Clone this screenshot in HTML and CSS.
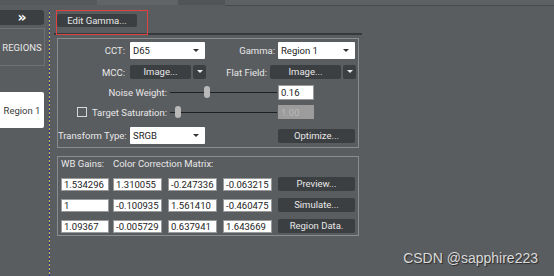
FILE: index.html
```html
<!DOCTYPE html>
<html lang="en">
<head>
    <meta charset="UTF-8">
    <title>Region Settings</title>
    <link rel="stylesheet" href="styles.css">
</head>
<body>

    <div class="strip">
        <span class="seg seg-1"></span>
        <span class="seg seg-2"></span>
        <span class="seg seg-3"></span>
        <span class="seg seg-4"></span>
    </div>

    <div class="app">
        <aside class="side">
            <button class="collapse">&raquo;</button>
            <div class="tab">REGIONS</div>
            <div class="region">Region 1</div>
        </aside>

        <div class="divider"></div>

        <main class="main">
            <div class="toolbar">
                <button class="btn gamma">Edit Gamma...</button>
            </div>
            <div class="mark"></div>
            <div class="rule"></div>

            <section class="group settings">
                <div class="row">
                    <label class="lbl w-a">CCT:</label>
                    <div class="combo c-a">D65<span class="caret"></span></div>
                    <label class="lbl w-b">Gamma:</label>
                    <div class="combo c-b">Region 1<span class="caret"></span></div>
                </div>
                <div class="row r-split">
                    <label class="lbl w-a">MCC:</label>
                    <div class="split s-a">
                        <button class="btn">Image...</button>
                        <button class="btn arrow"><span class="caret light"></span></button>
                    </div>
                    <label class="lbl w-d">Flat Field:</label>
                    <div class="split s-b">
                        <button class="btn">Image...</button>
                        <button class="btn arrow"><span class="caret light"></span></button>
                    </div>
                </div>
                <div class="row r-slide">
                    <label class="lbl w-c">Noise Weight:</label>
                    <div class="slider"><span class="thumb" style="left: 34px"></span></div>
                    <div class="field num">0.16</div>
                </div>
                <div class="row r-slide r-sat">
                    <div class="lbl w-c">
                        <span class="check"></span>
                        <span>Target Saturation:</span>
                    </div>
                    <div class="slider"><span class="thumb" style="left: 5px"></span></div>
                    <div class="field num off">1.00</div>
                </div>
                <div class="row r-last">
                    <label class="lbl w-a">Transform Type:</label>
                    <div class="combo c-a">SRGB<span class="caret"></span></div>
                    <button class="btn wide">Optimize...</button>
                </div>
            </section>

            <section class="group matrix">
                <div class="heads">
                    <span class="h-wb">WB Gains:</span>
                    <span>Color Correction Matrix:</span>
                </div>
                <div class="mrow">
                    <div class="field wb">1.534296</div>
                    <div class="field cell">1.310055</div>
                    <div class="field cell">-0.247336</div>
                    <div class="field cell">-0.063215</div>
                    <button class="btn wide">Preview...</button>
                </div>
                <div class="mrow">
                    <div class="field wb">1</div>
                    <div class="field cell">-0.100935</div>
                    <div class="field cell">1.561410</div>
                    <div class="field cell">-0.460475</div>
                    <button class="btn wide">Simulate...</button>
                </div>
                <div class="mrow">
                    <div class="field wb">1.09367</div>
                    <div class="field cell">-0.005729</div>
                    <div class="field cell">0.637941</div>
                    <div class="field cell">1.643669</div>
                    <button class="btn wide">Region Data.</button>
                </div>
            </section>
        </main>
    </div>

    <div class="watermark">CSDN @sapphire223</div>

</body>
</html>
```

FILE: styles.css
```css
body {
    margin: 0;
    height: 276px;
    overflow: hidden;
    position: relative;
    background-color: #5a5d60;
    color: #e8e8e8;
    font-family: Roboto, "Noto Sans", sans-serif;
    font-size: 9.5px;
}

/* franja superior */
.strip {
    display: flex;
    align-items: flex-start;
    height: 6px;
}

.seg {
    height: 5px;
}

.seg-1 { width: 97px; background-color: #56595c; }
.seg-2 { width: 81px; background-color: #616467; }
.seg-3 { width: 47px; background-color: #525558; }
.seg-4 {
    flex: 1;
    background-color: #5e6164;
    border-bottom: 1px solid #484a4d;
}

.app {
    display: flex;
    height: 270px;
}

/* barra lateral */
.side {
    width: 45px;
    display: flex;
    flex-direction: column;
}

.collapse {
    margin-top: 4px;
    width: 44px;
    height: 15px;
    padding: 0;
    border: none;
    border-radius: 0 3px 3px 0;
    background-color: #3c3f42;
    color: #fff;
    font-family: "DejaVu Sans", sans-serif;
    font-size: 14px;
    font-weight: bold;
    line-height: 13px;
}

.tab {
    margin-top: 3px;
    height: 38px;
    box-sizing: border-box;
    border: 1px solid #6e7174;
    border-left: none;
    display: flex;
    align-items: center;
    justify-content: center;
}

.region {
    margin-top: 26px;
    width: 44px;
    height: 36px;
    background-color: #fff;
    color: #3a3a3a;
    border-radius: 0 2px 2px 0;
    display: flex;
    align-items: center;
    justify-content: center;
}

.divider {
    width: 1px;
    margin: 4px 0 0 4px;
    background: repeating-linear-gradient(to bottom, #2d2f9c 0 2px, #c8c04c 2px 4px);
}

/* zona principal */
.main {
    position: relative;
    margin-left: 4px;
    width: 308px;
}

.toolbar {
    height: 27px;
}

.btn {
    height: 14px;
    padding: 0;
    border: none;
    border-radius: 2px;
    background-color: #3c3f42;
    color: #e8e8e8;
    font-family: inherit;
    font-size: 9.5px;
    line-height: 14px;
}

.gamma {
    margin: 8px 0 0 3px;
    width: 80px;
    height: 13px;
    line-height: 13px;
}

/* recuadro rojo de la captura */
.mark {
    position: absolute;
    left: 2px;
    top: 4px;
    width: 92px;
    height: 25px;
    box-sizing: border-box;
    border: 1px solid #e0423f;
}

.rule {
    height: 2px;
    background-color: #38393c;
}

.group {
    margin: 3px 0 0 3px;
    width: 302px;
    box-sizing: border-box;
    border: 1px solid #8b8e91;
}

.settings {
    height: 110px;
    padding-top: 3px;
}

.row {
    display: flex;
    align-items: center;
    height: 17px;
}

.r-split {
    height: 14px;
    margin-top: 6px;
}

.r-slide {
    height: 15px;
    margin-top: 6px;
}

.r-sat {
    margin-top: 5px;
    height: 14px;
}

.r-last {
    margin-top: 8px;
}

.lbl {
    text-align: right;
    white-space: nowrap;
}

.w-a { width: 67px; margin-right: 5px; }
.w-b { width: 70px; margin-right: 3px; }
.w-c { width: 109px; }
.w-d { width: 61px; margin-right: 3px; }

.r-sat .lbl {
    display: flex;
    align-items: center;
    justify-content: flex-end;
}

.check {
    width: 8px;
    height: 8px;
    margin-right: 5px;
    border: 1px solid #d8d8d8;
}

.combo {
    position: relative;
    height: 17px;
    box-sizing: border-box;
    padding-left: 3px;
    background-color: #fff;
    border-radius: 1px;
    color: #222;
    line-height: 17px;
}

.c-a { width: 75px; }
.c-b { width: 77px; }

.caret {
    position: absolute;
    right: 6px;
    top: 7px;
    border-left: 3.5px solid transparent;
    border-right: 3.5px solid transparent;
    border-top: 3.5px solid #333;
}

.caret.light {
    right: 3px;
    top: 5px;
    border-top-color: #eee;
}

.split {
    display: flex;
    gap: 2px;
}

.split .btn {
    flex: 1;
}

.split .arrow {
    position: relative;
    flex: none;
    width: 13px;
}

.s-a { width: 76px; }
.s-b { width: 86px; }

.slider {
    position: relative;
    width: 107px;
    height: 15px;
    margin: 0 1px 0 3px;
    background: linear-gradient(#1f2022, #1f2022) 0 7px / 100% 1px no-repeat;
}

.thumb {
    position: absolute;
    top: 1px;
    width: 6px;
    height: 12px;
    border-radius: 3px;
    background-color: #b9b9b9;
}

.field {
    height: 13px;
    box-sizing: border-box;
    padding-left: 2px;
    background-color: #fff;
    border: 1px solid #9a9a9a;
    color: #222;
    line-height: 11px;
    white-space: nowrap;
    overflow: hidden;
}

.num {
    width: 36px;
    height: 15px;
    line-height: 13px;
}

.num.off {
    height: 14px;
    background-color: #9c9c9c;
    border-color: #9c9c9c;
    color: #b8b8b8;
}

.wide {
    width: 77px;
}

.r-last .wide {
    margin-left: 73px;
}

/* matriz */
.matrix {
    margin-top: 8px;
    height: 80px;
    padding: 0 0 0 3px;
}

.heads {
    height: 14px;
    line-height: 14px;
    display: flex;
}

.h-wb {
    width: 52px;
}

.mrow {
    display: flex;
    align-items: center;
    margin-top: 6px;
    height: 14px;
}

.mrow + .mrow {
    margin-top: 7px;
}

.wb { width: 48px; margin-right: 4px; }
.cell { width: 49px; margin-right: 6px; }

.watermark {
    position: absolute;
    right: 16px;
    bottom: 10px;
    color: #dadada;
    font-family: "Liberation Sans", Arial, sans-serif;
    font-size: 14px;
    text-shadow: 1px 1px 1px #2a2a2a;
}
```
